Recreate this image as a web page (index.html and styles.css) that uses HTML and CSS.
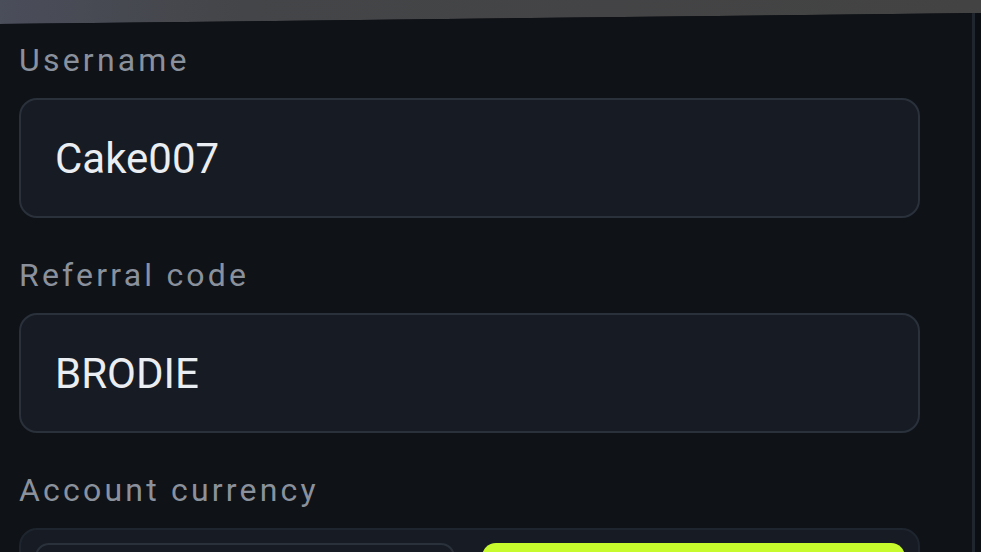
FILE: index.html
```html
<!DOCTYPE html>
<html lang="en">
<head>
<meta charset="utf-8">
<title>Account details</title>
<link rel="stylesheet" href="styles.css">
</head>
<body>
<div class="sheet">
  <form class="panel">
    <div class="field">
      <label class="field-label" for="username">Username</label>
      <div class="input-box"><input id="username" class="input" value="Cake007"></div>
    </div>
    <div class="field">
      <label class="field-label" for="referral">Referral code</label>
      <div class="input-box"><input id="referral" class="input" value="BRODIE"></div>
    </div>
    <div class="field">
      <span class="field-label">Account currency</span>
      <div class="segmented">
        <button type="button" class="seg seg-off">Fiat</button>
        <button type="button" class="seg seg-on">Crypto</button>
      </div>
    </div>
  </form>
</div>
</body>
</html>
```

FILE: styles.css
```css
* { box-sizing: border-box; }

html, body {
  margin: 0;
  height: 100%;
  overflow: hidden;
}

body {
  background: linear-gradient(90deg, #4a4d5a 0%, #444548 25%, #434343 100%);
  font-family: Roboto, "Noto Sans", sans-serif;
}

.sheet {
  margin-top: 13px;
  height: calc(100% - 13px);
  background: #0b0e12;
  clip-path: polygon(0 11px, 100% 0, 100% 100%, 0 100%);
  padding-right: 6px;
}

.panel {
  height: 100%;
  background: #0f1217;
  border-right: 3px solid #20262e;
  padding: 28px 0 0 19px;
  display: flex;
  flex-direction: column;
  gap: 38px;
}

.field {
  display: flex;
  flex-direction: column;
  gap: 19px;
}

.field-label {
  font-size: 32px;
  line-height: 38px;
  letter-spacing: 3.2px;
  color: #8a919c;
}

.input-box {
  width: 901px;
  height: 120px;
  flex: none;
  background: #171c24;
  border: 2px solid #2a313b;
  border-radius: 18px;
  display: flex;
  align-items: center;
  padding: 0 34px;
}

.input {
  width: 100%;
  border: 0;
  outline: 0;
  background: transparent;
  font-family: inherit;
  font-size: 42px;
  color: #eaedf1;
  padding: 0;
}

.segmented {
  width: 901px;
  height: 120px;
  flex: none;
  background: #171c24;
  border: 2px solid #1f252e;
  border-radius: 18px;
  padding: 13px 13px 13px 14px;
  display: grid;
  grid-template-columns: 420px 1fr;
  gap: 27px;
}

.seg {
  border-radius: 14px;
  font-family: inherit;
  font-size: 30px;
}

.seg-off {
  background: #171c24;
  border: 2px solid #2a313b;
  color: #eaedf1;
}

.seg-on {
  background: #c8fb2e;
  border: 0;
  color: #0f1217;
}
```
